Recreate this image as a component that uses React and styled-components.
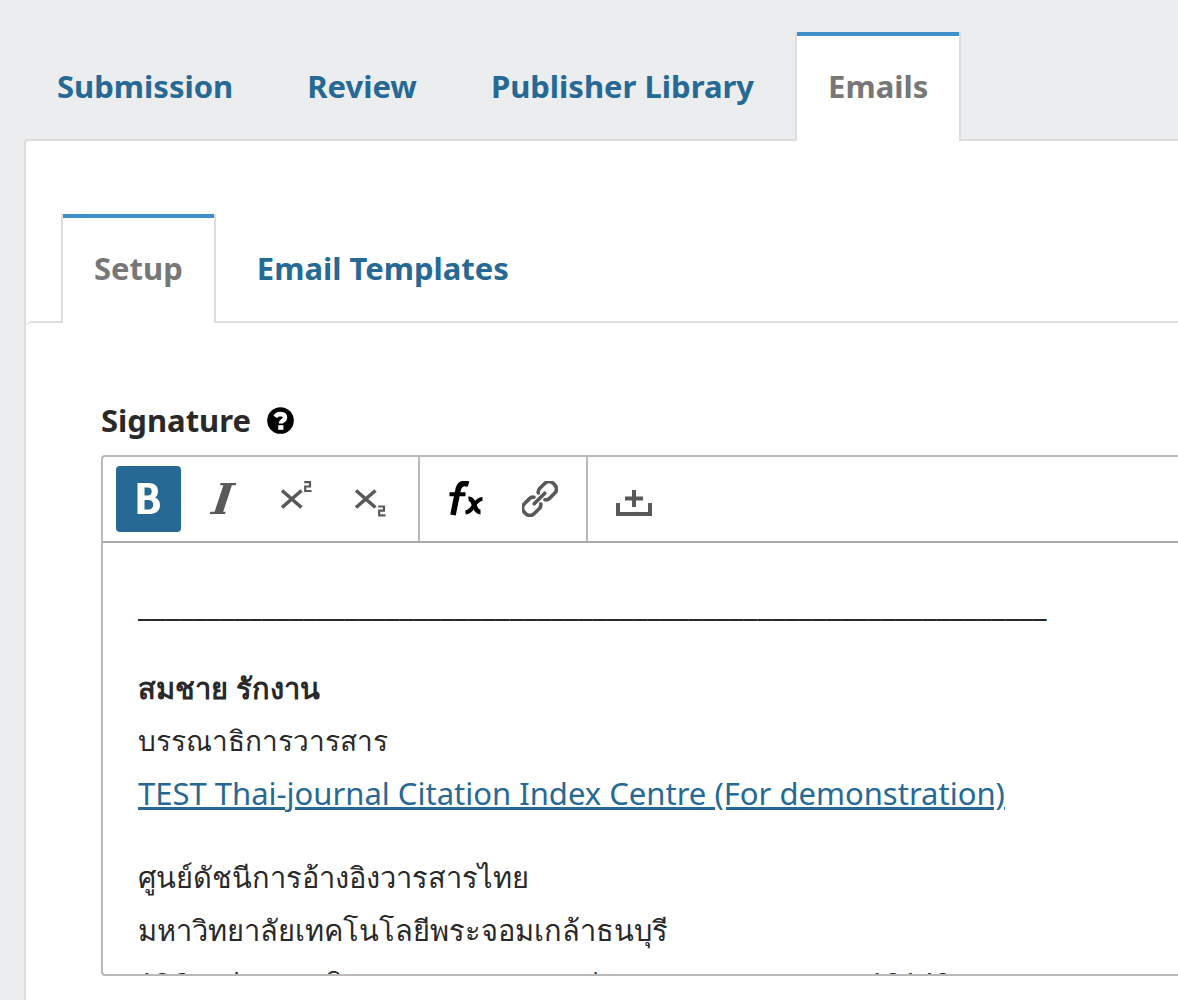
import React, { useState } from "react";
import styled, { createGlobalStyle } from "styled-components";

const color = {
  page: "#ebedee",
  link: "#276995",
  accent: "#3f8fcb",
  muted: "#777777",
  line: "#dddddd",
  editorLine: "#b9b9b9",
  text: "#292929",
  icon: "#595959",
};

const GlobalStyle = createGlobalStyle`
  *, *::before, *::after { box-sizing: border-box; }
  html { overflow: hidden; }
  body {
    margin: 0;
    background: ${color.page};
    color: ${color.text};
    font-family: "Noto Sans", sans-serif;
    font-size: 31px;
  }
`;

const Page = styled.main`
  min-height: 100vh;
  padding: 32px 0 0 24px;
  display: flex;
  flex-direction: column;
`;

const TabList = styled.div`
  display: flex;
  gap: 8px;
  padding-left: ${(p) => p.$indent || 0}px;
  margin-bottom: -2px;
`;

const Tab = styled.button`
  flex: none;
  height: 109px;
  padding: 0 31px 2px;
  border: solid ${(p) => (p.$active ? color.line : "transparent")};
  border-width: 0 2px;
  background: ${(p) => (p.$active ? "#ffffff" : "transparent")};
  box-shadow: ${(p) => (p.$active ? `inset 0 4px 0 ${color.accent}` : "none")};
  color: ${(p) => (p.$active ? color.muted : color.link)};
  font: inherit;
  font-weight: 700;
  white-space: nowrap;
  cursor: pointer;
  z-index: ${(p) => (p.$active ? 1 : 0)};
`;

const Panel = styled.section`
  flex: 1;
  padding-top: 73px;
  background: #ffffff;
  border: solid ${color.line};
  border-width: 2px 0 0 2px;
  border-top-left-radius: 4px;
`;

const SubPanel = styled.section`
  padding: 73px 0 24px 75px;
  border-top: 2px solid ${color.line};
  border-top-left-radius: 6px;
`;

const FieldHeading = styled.div`
  display: flex;
  align-items: center;
  gap: 16px;
  height: 48px;
  margin-bottom: 11px;
`;

const FieldLabel = styled.span`
  font-weight: 700;
`;

const HelpButton = styled.button`
  display: flex;
  padding: 0;
  border: 0;
  background: none;
  cursor: pointer;
`;

const Editor = styled.div`
  border: solid ${color.editorLine};
  border-width: 2px 0 2px 2px;
  border-radius: 4px 0 0 4px;
  overflow: hidden;
`;

const Toolbar = styled.div`
  display: flex;
  border-bottom: 2px solid #aaaaaa;
`;

const ToolGroup = styled.div`
  display: flex;
  gap: 9px;
  padding: 9px 15px 9px 13px;

  & + & {
    padding-right: 14px;
    border-left: 2px solid ${color.editorLine};
  }
`;

const ToolButton = styled.button`
  display: flex;
  align-items: center;
  justify-content: center;
  width: 65px;
  height: 66px;
  padding: 0;
  border: 0;
  border-radius: 4px;
  background: ${(p) => (p.$on ? color.link : "transparent")};
  color: ${(p) => (p.$on ? "#ffffff" : color.icon)};
  cursor: pointer;
`;

const EditArea = styled.div`
  height: 431px;
  padding: 35px 35px 0;
  overflow: hidden;
  line-height: 53px;
  outline: none;
`;

const Paragraph = styled.p`
  margin: 0 0 30px;
  white-space: nowrap;
`;

const lineSize = { latin: 31, thai: 29, role: 28 };

const Line = styled.span`
  display: block;
  font-size: ${(p) => lineSize[p.$kind || "latin"]}px;
  font-weight: ${(p) => (p.$bold ? 700 : 400)};
`;

const JournalLink = styled.a`
  color: ${color.link};
  text-decoration: underline;
`;

const Icon = ({ children, size = 36 }) => (
  <svg width={size} height={size} viewBox={`0 0 ${size} ${size}`} fill="none" aria-hidden="true">
    {children}
  </svg>
);

const HelpIcon = () => (
  <Icon size={27}>
    <circle cx="13.5" cy="13.5" r="13.3" fill="#000" />
    <path d="M8.3 9.8Q10 7 13.4 7Q18 7.2 18 10.4Q18 12.4 15.8 13.6Q14 14.6 14 16.600" stroke="#fff" strokeWidth="4.400" />
    <rect x="11.2" y="18.2" width="5.2" height="4.6" fill="#fff" />
  </Icon>
);

const BoldIcon = () => (
  <Icon>
    <path
      fill="currentColor"
      fillRule="evenodd"
      d="M6.500 2H17.5C23.5 2 27 5 27 10C27 13 26 15.2 24 16.6C27.4 18 29 20.6 29 24C29 29.6 25 33 18.500 33H6.500ZM13.500 6.500V14.500H16.500C19.300 14.500 20.700 13 20.700 10.400C20.700 7.800 19.300 6.500 16.700 6.500ZM13.500 19V28.500H17.500C20.500 28.500 22.200 26.800 22.200 23.800C22.200 20.600 20.500 19 17.500 19Z"
    />
  </Icon>
);

const ItalicIcon = () => (
  <Icon>
    <path fill="currentColor" d="M15.600 2H31.300L30.700 4.200H26.900L18.200 30.800H20.800L20 33H4.600L5.300 30.800H9.600L18.400 4.200H15Z" />
  </Icon>
);

const SupIcon = () => (
  <Icon>
    <path d="M3 9.500L22.500 26.500M22.500 9.500L3 26.500" stroke="currentColor" strokeWidth="3.600" />
    <path d="M25.200 1.200H31V5.500H26.200V10H32.500" stroke="currentColor" strokeWidth="2.200" />
  </Icon>
);

const SubIcon = () => (
  <Icon>
    <path d="M3 9.500L22.500 26.500M22.500 9.500L3 26.500" stroke="currentColor" strokeWidth="3.600" />
    <path d="M25.200 25.500H31V29.700H26.200V34.300H32.500" stroke="currentColor" strokeWidth="2.200" />
  </Icon>
);

const FormulaIcon = () => (
  <Icon>
    <g stroke="#000">
      <path d="M5 34L9.800 10Q11 3 15.500 2.600Q18 2.400 20.500 3.200" strokeWidth="5.600" />
      <path d="M1.500 13.300H17.500" strokeWidth="4" />
      <path d="M20.500 18Q24 17.500 26 23.500Q28.500 31 32.500 31" strokeWidth="4.800" />
      <path d="M34.500 18Q30 18 26 24.500Q22 31 17.500 31.500" strokeWidth="4.200" />
    </g>
  </Icon>
);

const LinkIcon = () => (
  <Icon>
    <g transform="translate(17.5 17.5) rotate(-45)" stroke="currentColor" strokeWidth="3.600" strokeLinecap="round">
      <path d="M3 -4.800Q4.500 -7 7.500 -7H14Q20.500 -7 20.500 0Q20.500 7 14 7H7.500Q4.500 7 3 4.800" />
      <path d="M-3 -4.800Q-4.500 -7 -7.500 -7H-14Q-20.500 -7 -20.500 0Q-20.500 7 -14 7H-7.500Q-4.500 7 -3 4.800" />
      <path d="M-7.500 0H7.500" />
    </g>
  </Icon>
);

const UploadIcon = () => (
  <Icon>
    <path d="M2 22V33H34V22M18 9V26M9 17.500H27" stroke="currentColor" strokeWidth="4" />
  </Icon>
);

const toolGroups = [
  [
    ["Bold", BoldIcon],
    ["Italic", ItalicIcon],
    ["Superscript", SupIcon],
    ["Subscript", SubIcon],
  ],
  [
    ["Insert formula", FormulaIcon],
    ["Insert link", LinkIcon],
  ],
  [["Upload", UploadIcon]],
];

function Tabs({ label, items, initial, indent }) {
  const [active, setActive] = useState(initial);
  return (
    <TabList role="tablist" aria-label={label} $indent={indent}>
      {items.map((item) => (
        <Tab
          key={item}
          type="button"
          role="tab"
          aria-selected={item === active}
          $active={item === active}
          onClick={() => setActive(item)}
        >
          {item}
        </Tab>
      ))}
    </TabList>
  );
}

export default function App() {
  const [bold, setBold] = useState(true);
  return (
    <>
      <GlobalStyle />
      <Page>
        <Tabs
          label="Workflow settings"
          items={["Submission", "Review", "Publisher Library", "Emails"]}
          initial="Emails"
        />
        <Panel>
          <Tabs label="Email settings" items={["Setup", "Email Templates"]} initial="Setup" indent={35} />
          <SubPanel>
            <FieldHeading>
              <FieldLabel id="signature-label">Signature</FieldLabel>
              <HelpButton type="button" aria-label="Help">
                <HelpIcon />
              </HelpButton>
            </FieldHeading>
            <Editor>
              <Toolbar role="toolbar" aria-label="Formatting">
                {toolGroups.map((group, i) => (
                  <ToolGroup key={i}>
                    {group.map(([name, Glyph]) => (
                      <ToolButton
                        key={name}
                        type="button"
                        aria-label={name}
                        $on={name === "Bold" && bold}
                        onClick={name === "Bold" ? () => setBold(!bold) : undefined}
                      >
                        <Glyph />
                      </ToolButton>
                    ))}
                  </ToolGroup>
                ))}
              </Toolbar>
              <EditArea
                role="textbox"
                aria-multiline="true"
                aria-labelledby="signature-label"
                contentEditable
                suppressContentEditableWarning
                spellCheck={false}
              >
                <Paragraph>
                  <Line>{"_".repeat(66)}</Line>
                </Paragraph>
                <Paragraph>
                  <Line $kind="thai" $bold>สมชาย รักงาน</Line>
                  <Line $kind="role">บรรณาธิการวารสาร</Line>
                  <Line>
                    <JournalLink href="#journal">
                      TEST Thai-journal Citation Index Centre (For demonstration)
                    </JournalLink>
                  </Line>
                </Paragraph>
                <Paragraph>
                  <Line $kind="thai">ศูนย์ดัชนีการอ้างอิงวารสารไทย</Line>
                  <Line $kind="thai">มหาวิทยาลัยเทคโนโลยีพระจอมเกล้าธนบุรี</Line>
                  <Line $kind="thai">126 ถ.ประชาอุทิศ แขวงบางมด เขตทุ่งครุ กรุงเทพมหานคร 10140</Line>
                </Paragraph>
              </EditArea>
            </Editor>
          </SubPanel>
        </Panel>
      </Page>
    </>
  );
}
